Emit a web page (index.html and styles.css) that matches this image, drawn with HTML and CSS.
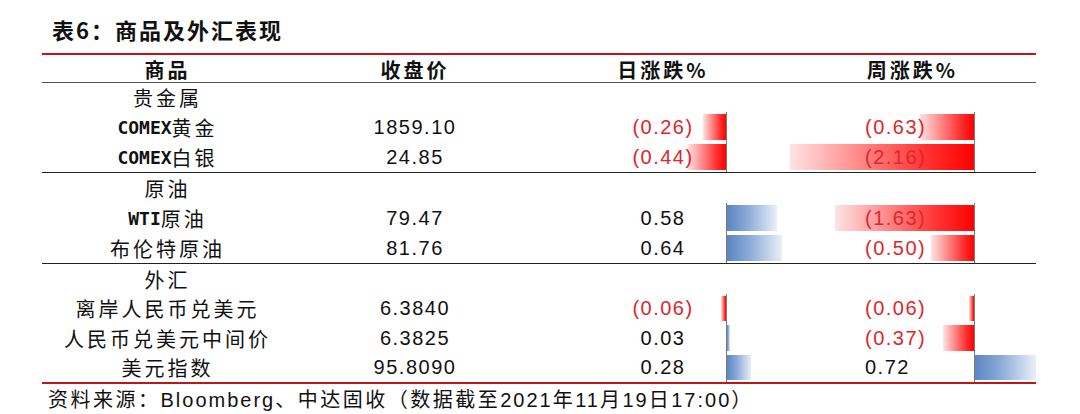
FILE: index.html
```html
<!DOCTYPE html>
<html lang="zh-CN">
<head>
<meta charset="utf-8">
<title>表6：商品及外汇表现</title>
<link rel="stylesheet" href="styles.css">
</head>
<body>
<div class="page">
  <h1 class="title">表6：商品及外汇表现</h1>
  <div class="table">
    <div class="row head">
      <div class="c name">商品</div>
      <div class="c price">收盘价</div>
      <div class="c day">日涨跌%</div>
      <div class="c week">周涨跌%</div>
    </div>

    <div class="section s1">
      <div class="row">
        <div class="c name">贵金属</div><div class="c price"></div><div class="c day"></div><div class="c week"></div>
      </div>
      <div class="row">
        <div class="c name"><span class="lat">COMEX</span>黄金</div>
        <div class="c price num">1859.10</div>
        <div class="c day bar-cell"><span class="bar neg" style="width:23px"></span><span class="num red">(0.26)</span></div>
        <div class="c week bar-cell"><span class="bar neg" style="width:54px"></span><span class="num red">(0.63)</span></div>
      </div>
      <div class="row">
        <div class="c name"><span class="lat">COMEX</span>白银</div>
        <div class="c price num">24.85</div>
        <div class="c day bar-cell"><span class="bar neg" style="width:38px"></span><span class="num red">(0.44)</span></div>
        <div class="c week bar-cell"><span class="bar neg" style="width:184px"></span><span class="num red">(2.16)</span></div>
      </div>
    </div>

    <div class="section s2">
      <div class="row">
        <div class="c name">原油</div><div class="c price"></div><div class="c day"></div><div class="c week"></div>
      </div>
      <div class="row">
        <div class="c name"><span class="lat">WTI</span>原油</div>
        <div class="c price num">79.47</div>
        <div class="c day bar-cell"><span class="bar pos" style="width:50px"></span><span class="num">0.58</span></div>
        <div class="c week bar-cell"><span class="bar neg" style="width:139px"></span><span class="num red">(1.63)</span></div>
      </div>
      <div class="row">
        <div class="c name">布伦特原油</div>
        <div class="c price num">81.76</div>
        <div class="c day bar-cell"><span class="bar pos" style="width:55px"></span><span class="num">0.64</span></div>
        <div class="c week bar-cell"><span class="bar neg" style="width:43px"></span><span class="num red">(0.50)</span></div>
      </div>
    </div>

    <div class="section s3">
      <div class="row">
        <div class="c name">外汇</div><div class="c price"></div><div class="c day"></div><div class="c week"></div>
      </div>
      <div class="row">
        <div class="c name">离岸人民币兑美元</div>
        <div class="c price num">6.3840</div>
        <div class="c day bar-cell"><span class="bar neg" style="width:5px"></span><span class="num red">(0.06)</span></div>
        <div class="c week bar-cell"><span class="bar neg" style="width:5px"></span><span class="num red">(0.06)</span></div>
      </div>
      <div class="row">
        <div class="c name">人民币兑美元中间价</div>
        <div class="c price num">6.3825</div>
        <div class="c day bar-cell"><span class="bar pos" style="width:3px"></span><span class="num">0.03</span></div>
        <div class="c week bar-cell"><span class="bar neg" style="width:31px"></span><span class="num red">(0.37)</span></div>
      </div>
      <div class="row">
        <div class="c name">美元指数</div>
        <div class="c price num">95.8090</div>
        <div class="c day bar-cell"><span class="bar pos" style="width:24px"></span><span class="num">0.28</span></div>
        <div class="c week bar-cell"><span class="bar pos" style="width:61px"></span><span class="num">0.72</span></div>
      </div>
    </div>
  </div>
  <p class="source">资料来源：<span class="src-lat">Bloomberg</span>、中达固收（数据截至<span class="src-lat">2021</span>年<span class="src-lat">11</span>月<span class="src-lat">19</span>日<span class="src-lat">17:00</span>）</p>
</div>
</body>
</html>
```

FILE: styles.css
```css
* { box-sizing: border-box; }

html, body {
  margin: 0;
  padding: 0;
  background: #ffffff;
}

body {
  font-family: "Noto Sans CJK SC", "Liberation Sans", sans-serif;
  color: #111;
}

.page {
  width: 1080px;
  height: 414px;
  overflow: hidden;
}

.title {
  margin: 0;
  height: 53px;
  padding: 14px 0 0 52px;
  font-size: 22px;
  line-height: 30px;
  font-weight: 700;
  letter-spacing: 2px;
  color: #111;
}

.table {
  margin-left: 42px;
  width: 994px;
  border-top: 2px solid #c0141b;
  border-bottom: 2px solid #c0141b;
}

.row {
  display: grid;
  grid-template-columns: 251px 244px 252px 247px;
  align-items: center;
}

.head {
  height: 28px;
  border-bottom: 1px solid #555;
  font-weight: 700;
}

.head .c {
  font-size: 20px;
  letter-spacing: 3px;
}

.section {
  display: grid;
}

.s1 { grid-template-rows: 29px 30px 30px; border-bottom: 1px solid #222; }
.s2 { grid-template-rows: 30px 30px 30px; border-bottom: 1px solid #222; }
.s3 { grid-template-rows: 30px 29px 30px 29px; }

.section .row { height: 100%; }

.c {
  height: 100%;
  display: flex;
  align-items: center;
  justify-content: center;
  font-size: 20px;
  white-space: nowrap;
}

.name {
  letter-spacing: 3px;
}

.lat {
  font-family: "DejaVu Sans Mono", "Liberation Mono", monospace;
  font-weight: 700;
  font-size: 18px;
  letter-spacing: 0;
}

.num {
  font-family: "Liberation Sans", sans-serif;
  font-size: 20px;
  letter-spacing: 1.5px;
}

.red { color: #e0262c; }

.bar-cell {
  position: relative;
}

.day.bar-cell { justify-content: center; }
.week.bar-cell { justify-content: flex-start; padding-left: 76px; }

.bar-cell::before {
  content: "";
  position: absolute;
  top: 0;
  bottom: 0;
  width: 1px;
  background: #7a7a7a;
  z-index: 2;
}

.day.bar-cell::before { left: 189px; }
.week.bar-cell::before { left: 185px; }

.bar-cell .num {
  position: relative;
  z-index: 1;
}

.bar {
  position: absolute;
  top: 2px;
  bottom: 2px;
  z-index: 0;
}

.bar.neg {
  background: linear-gradient(to left, #ff0000 0%, #ff3030 25%, #ffe3e3 100%);
}

.bar.pos {
  background: linear-gradient(to right, #5a86c4 0%, #8aa9d6 40%, #e9eff8 100%);
}

.day .bar.neg { right: calc(100% - 189px); }
.day .bar.pos { left: 190px; }
.week .bar.neg { right: calc(100% - 185px); }
.week .bar.pos { left: 186px; }

.source {
  margin: 0;
  height: 29px;
  padding-left: 48px;
  font-size: 20px;
  line-height: 29px;
  letter-spacing: 2.5px;
  white-space: nowrap;
}

.src-lat {
  font-family: "Liberation Sans", sans-serif;
  letter-spacing: 2px;
}
```
